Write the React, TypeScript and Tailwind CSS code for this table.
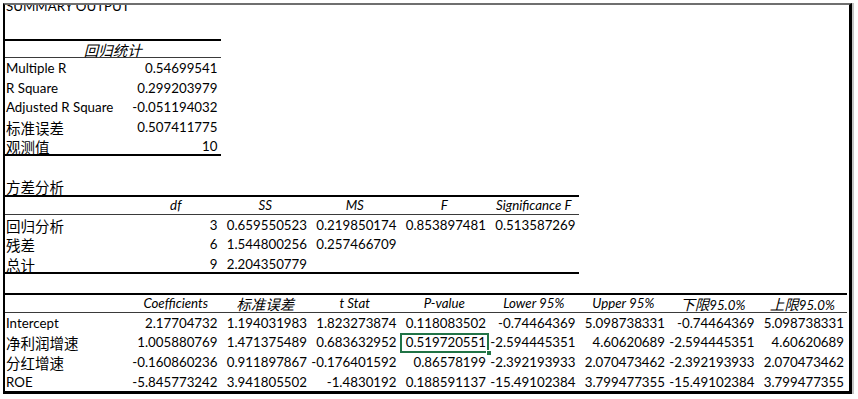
import type { ReactNode } from 'react';

const GRID = 'grid grid-cols-[126px_repeat(8,89.5px)]';

function Zh({ children }: { children: ReactNode }) {
  return <span className="text-[14.5px] font-['Noto_Sans_CJK_SC',sans-serif]">{children}</span>;
}

type Align = 'l' | 'r' | 'c';

function Cell({
  children,
  align = 'r',
  head = false,
  last = false,
  span2 = false,
  selected = false,
}: {
  children?: ReactNode;
  align?: Align;
  head?: boolean;
  last?: boolean;
  span2?: boolean;
  selected?: boolean;
}) {
  const alignCls = align === 'l' ? 'text-left pl-[1px]' : align === 'c' ? 'text-center px-[3px]' : 'text-right pr-[3px]';
  const lineCls = head
    ? 'border-t-2 border-b border-t-black border-b-[#3a3a3a] leading-[17.6px] italic'
    : last
      ? 'border-b-2 border-black leading-[19.6px] pt-px'
      : 'leading-[19.6px] pt-px';
  return (
    <div className={`relative h-[19.6px] whitespace-nowrap ${alignCls} ${lineCls} ${span2 ? 'col-span-2' : ''}`}>
      {children}
      {selected && (
        <>
          <div className="absolute left-0 right-0 top-[1px] -bottom-[1px] border-2 border-[#217346]" />
          <div className="absolute -right-[3px] -bottom-[4px] w-[6px] h-[6px] bg-[#217346] border border-white" />
        </>
      )}
    </div>
  );
}

function Row({ children }: { children?: ReactNode }) {
  return <div className={`${GRID} h-[19.6px]`}>{children}</div>;
}

const anova = [
  { label: '回归分析', v: ['3', '0.659550523', '0.219850174', '0.853897481', '0.513587269'] },
  { label: '残差', v: ['6', '1.544800256', '0.257466709', '', ''] },
  { label: '总计', v: ['9', '2.204350779', '', '', ''] },
];

const coef = [
  {
    label: 'Intercept',
    zh: false,
    v: ['2.17704732', '1.194031983', '1.823273874', '0.118083502', '-0.74464369', '5.098738331', '-0.74464369', '5.098738331'],
  },
  {
    label: '净利润增速',
    zh: true,
    v: ['1.005880769', '1.471375489', '0.683632952', '0.519720551', '-2.594445351', '4.60620689', '-2.594445351', '4.60620689'],
  },
  {
    label: '分红增速',
    zh: true,
    v: ['-0.160860236', '0.911897867', '-0.176401592', '0.86578199', '-2.392193933', '2.070473462', '-2.392193933', '2.070473462'],
  },
  {
    label: 'ROE',
    zh: false,
    v: ['-5.845773242', '3.941805502', '-1.4830192', '0.188591137', '-15.49102384', '3.799477355', '-15.49102384', '3.799477355'],
  },
];

export default function App() {
  return (
    <div className="w-[858px] h-[399px] bg-white text-black text-[13.3px] font-['Lato','Noto_Sans_CJK_SC',sans-serif] overflow-hidden">
      <div className="flex pl-[3px] pt-[3px]">
        <div className="w-[849px] h-[391px] border-t-2 border-l-2 border-r-[3px] border-b-[3px] border-t-[#6f6f6f] border-l-black border-r-black border-b-black overflow-hidden">
          {/* title + blank row */}
          <div className="flex flex-col h-[33.5px]">
            <div className="-mt-[8px] pl-[1px] leading-[19.6px]">SUMMARY OUTPUT</div>
          </div>

          {/* 回归统计 */}
          <Row>
            <Cell head span2 align="c">
              <Zh>回归统计</Zh>
            </Cell>
          </Row>
          <Row>
            <Cell align="l">Multiple R</Cell>
            <Cell>0.54699541</Cell>
          </Row>
          <Row>
            <Cell align="l">R Square</Cell>
            <Cell>0.299203979</Cell>
          </Row>
          <Row>
            <Cell align="l">Adjusted R Square</Cell>
            <Cell>-0.051194032</Cell>
          </Row>
          <Row>
            <Cell align="l">
              <Zh>标准误差</Zh>
            </Cell>
            <Cell>0.507411775</Cell>
          </Row>
          <Row>
            <Cell align="l" last>
              <Zh>观测值</Zh>
            </Cell>
            <Cell last>10</Cell>
          </Row>
          <Row />

          {/* 方差分析 */}
          <Row>
            <Cell align="l">
              <Zh>方差分析</Zh>
            </Cell>
          </Row>
          <Row>
            <Cell head />
            <Cell head align="c">df</Cell>
            <Cell head align="c">SS</Cell>
            <Cell head align="c">MS</Cell>
            <Cell head align="c">F</Cell>
            <Cell head align="c">Significance F</Cell>
          </Row>
          {anova.map((r, i) => (
            <Row key={r.label}>
              <Cell align="l" last={i === anova.length - 1}>
                <Zh>{r.label}</Zh>
              </Cell>
              {r.v.map((v, j) => (
                <Cell key={j} last={i === anova.length - 1}>
                  {v}
                </Cell>
              ))}
            </Row>
          ))}
          <Row />

          {/* coefficients */}
          <Row>
            <Cell head />
            <Cell head align="c">Coefficients</Cell>
            <Cell head align="c">
              <Zh>标准误差</Zh>
            </Cell>
            <Cell head align="c">t Stat</Cell>
            <Cell head align="c">P-value</Cell>
            <Cell head align="c">Lower 95%</Cell>
            <Cell head align="c">Upper 95%</Cell>
            <Cell head align="c">
              <Zh>下限</Zh>95.0%
            </Cell>
            <Cell head align="c">
              <Zh>上限</Zh>95.0%
            </Cell>
          </Row>
          {coef.map((r) => (
            <Row key={r.label}>
              <Cell align="l">{r.zh ? <Zh>{r.label}</Zh> : r.label}</Cell>
              {r.v.map((v, j) => (
                <Cell key={j} selected={r.label === '净利润增速' && j === 3}>
                  {v}
                </Cell>
              ))}
            </Row>
          ))}
        </div>
        <div className="w-[2px] h-[391px] bg-[#c4c4c4]" />
      </div>
    </div>
  );
}
